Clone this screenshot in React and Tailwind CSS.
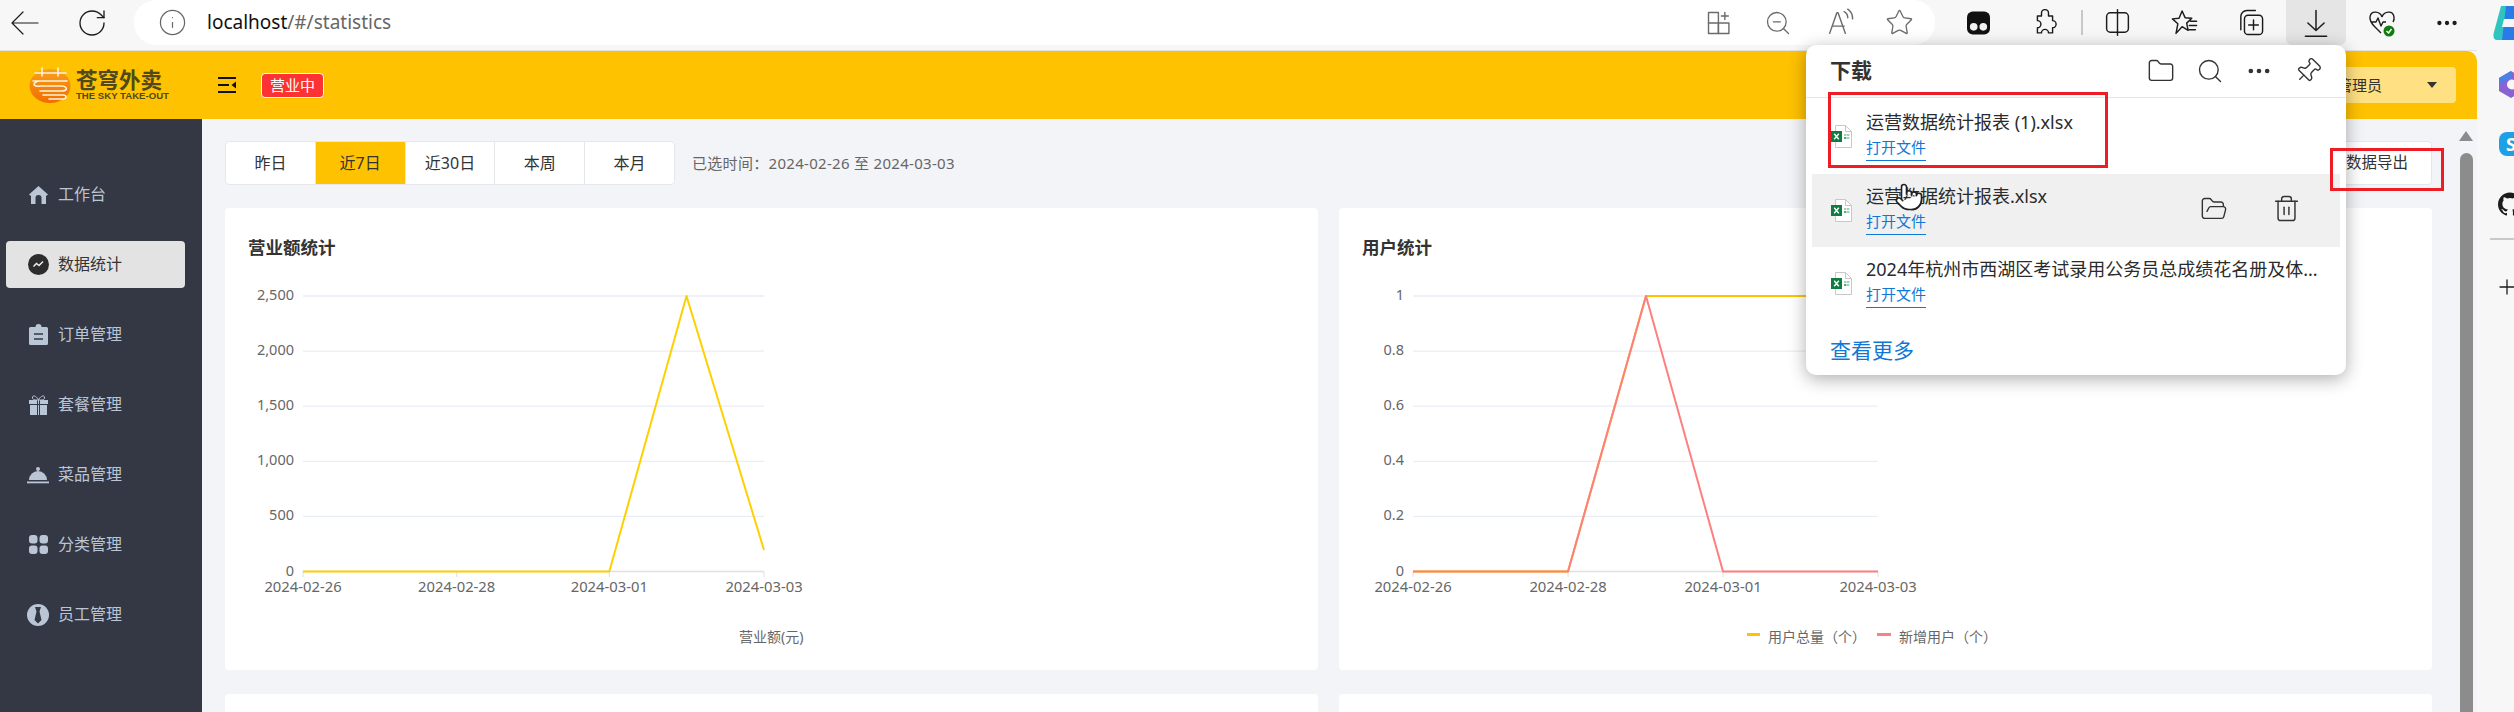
import React from 'react';
import { RotateCw, Info, ZoomOut, Star, Search, MoreHorizontal, Pin, FolderOpen, Trash2, Plus, Pointer, Folder } from 'lucide-react';

const FONT = 'font-["Noto_Sans","Noto_Sans_CJK_SC",sans-serif]';

function ExcelIcon() {
  return (
    <svg width="21" height="23" viewBox="0 0 21 23" className="shrink-0">
      <path d="M4.5 .5H14.5L20.5 6.5V22.5H4.5Z" fill="#fff" stroke="#c8c8c8" />
      <path d="M14.5 .5V6.5H20.5" fill="none" stroke="#c8c8c8" />
      <rect x="13" y="9" width="2.4" height="2" fill="#9fd3b8" />
      <rect x="16" y="9" width="2.4" height="2" fill="#9fd3b8" />
      <rect x="13" y="12" width="2.4" height="2" fill="#4fae83" />
      <rect x="16" y="12" width="2.4" height="2" fill="#9fd3b8" />
      <rect x="0" y="6" width="11" height="11" fill="#107c41" />
      <path d="M3.2 8.7 7.8 14.3M7.8 8.7 3.2 14.3" stroke="#fff" strokeWidth="1.4" />
    </svg>
  );
}

function DownloadItem({ name, hover }) {
  return (
    <div className={`mx-[6px] flex h-[73px] items-center pl-[19px] ${hover ? 'bg-[#f0f0f0]' : ''}`}>
      <ExcelIcon />
      <div className="-mt-[3px] ml-[14px] min-w-0 flex-1">
        <div className="whitespace-nowrap text-[18px] leading-[24px] text-[#2b2b2b]">{name}</div>
        <div className="mt-[2px] inline-block border-b-[1px] border-[#0f78d4] pb-[2px] text-[15px] leading-[22px] text-[#0f78d4]">打开文件</div>
      </div>
      {hover && (
        <div className="flex items-center gap-[44px] pb-[4px] pr-[39px] text-[#333]">
          <FolderOpen size={28} strokeWidth={1.2} />
          <Trash2 size={29} strokeWidth={1.2} />
        </div>
      )}
    </div>
  );
}

function Chart({ title, labels, series, xs, legend }) {
  const left = xs[0];
  const right = xs[3];
  const top = 88;
  const step = 55.1;
  return (
    <div className="h-[462px] min-w-0 flex-1 rounded-[4px] bg-white">
      <svg width="1093" height="462" className="block" style={{ fontFamily: '"Noto Sans","Noto Sans CJK SC",sans-serif' }}>
        <text x="23" y="46" fontSize="17.5" fontWeight="700" fill="#333">{title}</text>
        {labels.map((l, i) => (
          <g key={l}>
            <line x1={left} x2={right} y1={top + i * step} y2={top + i * step} stroke={i === 5 ? '#e0e0e0' : '#e9edf6'} strokeWidth="1.3" />
            <text x={left - 9} y={top + i * step + 4} fontSize="14.5" textAnchor="end" fill="#666">{l}</text>
          </g>
        ))}
        {xs.map((x, i) => (
          <g key={x}>
            <line x1={x} x2={x} y1="363.5" y2="369" stroke="#e0e0e0" />
            <text x={x} y="384" fontSize="14.8" textAnchor="middle" fill="#666">{['2024-02-26', '2024-02-28', '2024-03-01', '2024-03-03'][i]}</text>
          </g>
        ))}
        {series.map((s) => (
          <polyline key={s.color} points={s.points} fill="none" stroke={s.color} strokeWidth="2" strokeLinejoin="round" />
        ))}
        {legend}
      </svg>
    </div>
  );
}

function Nav({ icon, label, active }) {
  return (
    <div className={`mx-[6px] mb-[23px] flex h-[47px] w-[179px] items-center rounded-[4px] pl-[21px] ${active ? 'bg-[#e3e3e3] text-[#333]' : 'text-[#bac5d6]'}`}>
      <span className="flex w-[22px] justify-center">{icon}</span>
      <span className="ml-[9px] pb-[2px] text-[16px]">{label}</span>
    </div>
  );
}

const Ic = ({ children, w = 24, h = 24, vb = '0 0 24 24', className = '' }) => (
  <svg width={w} height={h} viewBox={vb} fill="none" stroke="currentColor" strokeWidth="1.2" strokeLinecap="round" strokeLinejoin="round" className={className}>{children}</svg>
);

function Tool({ x, children, grey }) {
  return (
    <div className={`flex shrink-0 items-center justify-center ${grey ? 'text-[#6b6b6b]' : 'text-[#1c1c1c]'}`} style={{ width: x }}>{children}</div>
  );
}

export default function App() {
  const tabs = ['昨日', '近7日', '近30日', '本周', '本月'];
  return (
    <div className={`relative flex h-[712px] w-[2514px] overflow-hidden bg-[#f7f7f7] ${FONT}`}>
      <div className="flex min-w-0 flex-1 flex-col">
        {/* browser toolbar */}
        <div className="flex h-[51px] shrink-0 items-start border-b border-[#e4e4e4]">
          <div className="flex h-[45px] w-[134px] shrink-0 items-center text-[#1c1c1c]">
            <Ic w={28} h={24} vb="0 0 28 24" className="ml-[11px]">
              <path d="M1 12H27M12 1 1 12 12 23" />
            </Ic>
            <RotateCw size={32} strokeWidth={1} className="ml-[37px]" />
          </div>
          <div className="flex h-[45px] w-[1801px] shrink-0 items-center rounded-[22px] bg-white">
            <Info size={29} strokeWidth={1} className="ml-[24px] text-[#666]" />
            <span className="ml-[20px] text-[19px] text-[#111]">localhost<span className="text-[#666]">/#/statistics</span></span>
            <div className="ml-auto flex items-center pr-[7px]">
              <Tool x={54} grey>
                <Ic w={28} h={28}>
                  <rect x="3" y="3" width="8.500" height="18" /><rect x="11.500" y="12" width="9" height="9" /><path d="M3 12h8.500M17 3v6M14 6h6" />
                </Ic>
              </Tool>
              <Tool x={64} grey>
                <ZoomOut size={28} strokeWidth={1.1} />
              </Tool>
              <Tool x={60} grey>
                <Ic w={29} h={29}>
                  <path d="M3 21 9 4h1l6 17M5 15h10M15 3c2 1 3 3 3 5M18 1c3 2 4 4 4 8" />
                </Ic>
              </Tool>
              <Tool x={58} grey>
                <Star size={29} strokeWidth={1.1} />
              </Tool>
            </div>
          </div>
          <div className="flex h-[45px] shrink-0 items-center">
            <Tool x={86}>
              <svg width="23" height="24" viewBox="0 0 24 24">
                <path d="M6 0H18A6 6 0 0 1 24 6V18A6 6 0 0 1 18 24H6A6 6 0 0 1 0 18V6A6 6 0 0 1 6 0Z" fill="#111" />
                <circle cx="7" cy="16" r="4" fill="#f1f1f1" /><circle cx="17" cy="16" r="4" fill="#f1f1f1" />
              </svg>
            </Tool>
            <Tool x={48}>
              <Ic w={28} h={28}>
                <path d="M9 3.500a3 3 0 0 1 6 0V6h3.500v4a3 3 0 0 1 0 6v4.500H15a3 3 0 0 0-6 0H5.500V16a3 3 0 0 0 0-6V6H9Z" />
              </Ic>
            </Tool>
            <div className="mx-[12px] h-[25px] w-[2px] shrink-0 bg-[#c9c9c9]" />
            <Tool x={44}>
              <Ic w={29} h={29}>
                <rect x="3" y="4" width="18" height="16" rx="3" /><path d="M12 1.500v21" />
              </Ic>
            </Tool>
            <Tool x={90}>
              <Ic w={29} h={29}>
                <path d="M10 2.500 12.500 8 18 8.500 13.800 12.500 15 18.500 10 15.500 5 21 6.500 13 2 9 7.500 8.500ZM17 11h5M16 14.500h6M16 18h5" />
              </Ic>
            </Tool>
            <Tool x={42}>
              <Ic w={29} h={29}>
                <rect x="7" y="6" width="15" height="16" rx="3" /><path d="M4 18V7a5 5 0 0 1 5-5h7M14.500 10v8M10.500 14h8" />
              </Ic>
            </Tool>
            <div className="ml-[15px] flex h-[45px] w-[60px] shrink-0 items-center justify-center rounded-b-[6px] bg-[#e5e5e5] text-[#1c1c1c]">
              <Ic w={30} h={30}>
                <path d="M12 2v16M5.500 12 12 18l6.500-6M3.500 22.500h17" />
              </Ic>
            </div>
            <Tool x={72}>
              <svg width="28" height="28" viewBox="0 0 28 28" fill="none" stroke="#1c1c1c" strokeWidth="1.400" strokeLinejoin="round">
                <path d="M14 8C12 2 3 1 2 8c-.6 4 2 7 5 10l6 6M14 8c2-6 11-7 12 0 .4 3-.4 4-1 5M3 13h5l2-4 3 8 2-4h3" />
                <circle cx="21" cy="22" r="5.500" fill="#107c10" stroke="none" />
                <path d="M18.500 22l2 2 3-4" stroke="#fff" strokeWidth="1.400" />
              </svg>
            </Tool>
            <Tool x={58}>
              <MoreHorizontal size={26} strokeWidth={2} />
            </Tool>
          </div>
        </div>

        {/* page */}
        <div className="relative flex min-h-0 flex-1 flex-col overflow-hidden rounded-tr-[10px]">
          <header className="flex h-[68px] shrink-0 items-center bg-[#ffc200]">
            <div className="flex w-[218px] items-center pl-[29px]">
              <svg width="42" height="36" viewBox="0 0 42 36" className="shrink-0">
                <defs>
                  <linearGradient id="lg" x1="0" y1="0" x2="0" y2="1">
                    <stop offset="0" stopColor="#f9a11b" /><stop offset="1" stopColor="#f26c00" />
                  </linearGradient>
                </defs>
                <ellipse cx="21" cy="19" rx="20.500" ry="17" fill="url(#lg)" />
                <path d="M6 6H37M13 1V9M29 1V9M4 14H38M9 14C2 17 5 20 12 19H33C39 20 39 24 32 24H11M14 28H34C38 28 38 32 34 32H20" fill="none" stroke="#fff3dc" strokeWidth="1.600" strokeLinecap="round" />
              </svg>
              <div className="ml-[5px] flex flex-col text-[#51491a]">
                <span className="whitespace-nowrap text-[21.500px] font-bold leading-[21px]">苍穹外卖</span>
                <span className={`mt-[1px] whitespace-nowrap font-["Liberation_Sans",sans-serif] text-[9.600px] font-bold leading-[10px]`}>THE SKY TAKE-OUT</span>
              </div>
            </div>
            <svg width="18" height="16" viewBox="0 0 18 16" className="shrink-0">
              <path d="M0 1H18M0 15H18M0 8H11" stroke="#111" strokeWidth="2" />
              <path d="M18 4.500V11.500L13.500 8Z" fill="#111" />
            </svg>
            <span className="ml-[25px] flex h-[25px] w-[63px] items-center justify-center rounded-[4px] border border-white bg-[#fd3333] text-[15px] text-white">营业中</span>
            <div className="ml-auto mr-[21px] flex h-[36px] w-[220px] items-center justify-end rounded-[4px] bg-[#ffe082] text-[#333]">
              <span className="text-[15px]">管理员</span>
              <span className="ml-[45px] mr-[19px] h-0 w-0 border-x-[5px] border-t-[6px] border-x-transparent border-t-[#333]" />
            </div>
          </header>

          <div className="flex min-h-0 flex-1">
            <aside className="w-[202px] shrink-0 bg-[#343744] pt-[52px]">
              <Nav label="工作台" icon={
                <svg width="19" height="18" viewBox="0 0 19 18" fill="currentColor"><path d="M9.500 0 19 8.500 17 10V18H12.500V12A3 3 0 0 0 6.500 12V18H2V10L0 8.500Z" /></svg>
              } />
              <Nav active label="数据统计" icon={
                <svg width="21" height="21" viewBox="0 0 21 21"><circle cx="10.500" cy="10.500" r="10.500" fill="#2d2d2d" /><path d="M5.500 12.500 8.500 9.500 11 11.500 15 7.500" fill="none" stroke="#eee" strokeWidth="1.500" /></svg>
              } />
              <Nav label="订单管理" icon={
                <svg width="19" height="21" viewBox="0 0 19 21"><path d="M1.500 3H6.500A3 3 0 0 1 12.500 3H17.500A1.500 1.500 0 0 1 19 4.500V19.500A1.500 1.500 0 0 1 17.500 21H1.500A1.500 1.500 0 0 1 0 19.500V4.500A1.500 1.500 0 0 1 1.500 3Z" fill="currentColor" /><path d="M5 10H14M5 15H14" stroke="#343744" strokeWidth="1.500" /></svg>
              } />
              <Nav label="套餐管理" icon={
                <svg width="19" height="20" viewBox="0 0 19 20"><rect x="0" y="5" width="19" height="4" fill="currentColor" /><rect x="1" y="10" width="17" height="10" fill="currentColor" /><path d="M8.500 5V20M10.500 5V20" stroke="#343744" /><path d="M9.500 5C7 0 3 0 3.500 3 3.500 5 7 5 9.500 5 12 5 15.500 5 15.500 3 16 0 12 0 9.500 5Z" fill="none" stroke="currentColor" /></svg>
              } />
              <Nav label="菜品管理" icon={
                <svg width="22" height="18" viewBox="0 0 22 18"><path d="M2 14A9 9 0 0 1 20 14Z" fill="currentColor" /><circle cx="11" cy="3" r="2" fill="currentColor" /><rect x="0" y="15.500" width="22" height="1.800" fill="currentColor" /></svg>
              } />
              <Nav label="分类管理" icon={
                <svg width="19" height="19" viewBox="0 0 19 19" fill="currentColor"><rect width="8.500" height="8.500" rx="3" /><rect x="10.500" width="8.500" height="8.500" rx="3" /><rect y="10.500" width="8.500" height="8.500" rx="3" /><rect x="10.500" y="10.500" width="8.500" height="8.500" rx="3" /></svg>
              } />
              <Nav label="员工管理" icon={
                <svg width="22" height="22" viewBox="0 0 22 22"><circle cx="11" cy="11" r="11" fill="currentColor" /><path d="M8 3H14L12.500 7.500 14.500 16 11 19.500 7.500 16 9.500 7.500Z" fill="#343744" /></svg>
              } />
            </aside>

            <main className="min-w-0 flex-1 overflow-hidden bg-[#f3f4f7] px-[23px] pt-[22px]">
              <div className="flex h-[44px] items-center">
                <div className="flex h-[44px] w-[450px] overflow-hidden rounded-[4px] border border-[#e5e7eb] bg-white">
                  {tabs.map((t, i) => (
                    <div key={t} className={`flex flex-1 items-center justify-center text-[16px] text-[#333] ${i > 0 ? 'border-l border-[#e5e7eb]' : ''} ${i === 1 ? 'bg-[#ffc200]' : ''}`}>{t}</div>
                  ))}
                </div>
                <span className="ml-[17px] text-[15px] tracking-[0.3px] text-[#666]">已选时间：2024-02-26 至 2024-03-03</span>
                <div className="ml-auto flex h-[44px] w-[110px] items-center justify-center rounded-[4px] border border-[#e5e7eb] bg-white text-[15.500px] text-[#333]">数据导出</div>
              </div>
              <div className="mt-[23px] flex gap-[21px]">
                <Chart
                  title="营业额统计"
                  labels={['2,500', '2,000', '1,500', '1,000', '500', '0']}
                  xs={[78, 231.700, 384.300, 539]}
                  series={[{ color: '#ffd000', points: '78,363.500 384.300,363.500 461.500,88 539,342' }]}
                  legend={<text x="514" y="434" fontSize="14" fill="#666">营业额(元)</text>}
                />
                <Chart
                  title="用户统计"
                  labels={['1', '0.8', '0.6', '0.4', '0.2', '0']}
                  xs={[74, 229, 384, 539]}
                  series={[
                    { color: '#ffc200', points: '74,363.500 229,363.500 307,88 539,88' },
                    { color: '#fd7f7f', points: '74,363.500 229,363.500 307,88 384,363.500 539,363.500' },
                  ]}
                  legend={
                    <g>
                      <rect x="408" y="425" width="13" height="3" fill="#ffc200" />
                      <text x="429" y="434" fontSize="14" fill="#666">用户总量（个）</text>
                      <rect x="538" y="425" width="14" height="3" fill="#fd7f7f" />
                      <text x="560" y="434" fontSize="14" fill="#666">新增用户（个）</text>
                    </g>
                  }
                />
              </div>
              <div className="mt-[24px] flex gap-[21px]">
                <div className="h-[200px] flex-1 rounded-[4px] bg-white" />
                <div className="h-[200px] flex-1 rounded-[4px] bg-white" />
              </div>
            </main>

            <div className="relative w-[22px] shrink-0 bg-[#f3f4f7]">
              <div className="absolute left-[4px] top-[12px] h-0 w-0 border-x-[7.500px] border-b-[10px] border-x-transparent border-b-[#8c8c8c]" />
              <div className="absolute left-[5px] top-[34px] h-[600px] w-[13px] rounded-full bg-[#8c8c8c]" />
            </div>
          </div>
        </div>
      </div>

      {/* browser side rail */}
      <div className="relative flex w-[37px] shrink-0 flex-col items-start overflow-hidden">
        <svg width="21" height="36" viewBox="0 0 21 36" className="ml-[16px] mt-[5px] shrink-0">
          <path d="M8 1H21V20L12 35H4C0 35 0 30 1 27Z" fill="#2fc4c0" />
          <path d="M13 1H21V35H9Z" fill="#2a7be8" />
          <path d="M11 14H21V22H9Z" fill="#f7f7f7" />
        </svg>
        <svg width="24" height="27" viewBox="0 0 24 27" className="ml-[22px] mt-[30px] shrink-0">
          <path d="M12 0 24 7V20L12 27 0 20V7Z" fill="#8a63d2" />
          <path d="M12 0 0 7V13L12 7Z" fill="#4a80e8" />
          <circle cx="13" cy="13.500" r="5" fill="#f7f7f7" />
        </svg>
        <div className="ml-[22px] mt-[34px] flex h-[24px] w-[24px] shrink-0 items-center justify-center rounded-[8px] bg-[#1ea0e6] text-[18px] font-bold text-white">S</div>
        <svg width="24" height="24" viewBox="0 0 24 24" className="ml-[21px] mt-[36px] shrink-0">
          <path fill="#1c1c1c" d="M12 .5C5.400.5 0 5.800 0 12.300c0 5.200 3.400 9.700 8.200 11.300.6.100.8-.3.800-.6v-2c-3.300.7-4-1.600-4-1.600-.5-1.400-1.300-1.800-1.300-1.800-1.100-.7.100-.7.100-.7 1.200.1 1.800 1.200 1.800 1.200 1.100 1.800 2.800 1.300 3.500 1 .1-.8.400-1.300.8-1.600-2.700-.3-5.500-1.300-5.500-5.900 0-1.300.5-2.400 1.200-3.200-.1-.3-.5-1.500.1-3.200 0 0 1-.3 3.300 1.200a11.500 11.500 0 0 1 6 0c2.300-1.500 3.300-1.200 3.300-1.200.7 1.700.2 2.900.1 3.200.8.800 1.200 1.900 1.200 3.200 0 4.600-2.800 5.600-5.500 5.900.4.400.8 1.100.8 2.200V23c0 .3.200.7.800.6 4.800-1.600 8.200-6 8.200-11.300C24 5.800 18.600.5 12 .5Z" />
        </svg>
        <div className="ml-[13px] mt-[22px] h-[2px] w-[30px] shrink-0 bg-[#c9c9c9]" />
        <Plus size={24} strokeWidth={1.3} className="ml-[18px] mt-[35px] shrink-0 text-[#1c1c1c]" />
      </div>

      {/* download flyout */}
      <div className="absolute left-[1806px] top-[45px] z-10 h-[330px] w-[540px] rounded-[10px] bg-white shadow-[0_4px_18px_rgba(0,0,0,0.32)]">
        <div className="flex h-[53px] items-center border-b border-[#e6e6e6] pl-[24px]">
          <span className="text-[21px] font-bold text-[#333]">下载</span>
          <div className="ml-auto flex items-center gap-[21px] pr-[24px] text-[#333]">
            <Folder size={28} strokeWidth={1.2} />
            <Search size={28} strokeWidth={1.2} />
            <MoreHorizontal size={28} strokeWidth={2} />
            <Pin size={28} strokeWidth={1.2} className="rotate-45" />
          </div>
        </div>
        <div className="pt-[2px]">
          <div className="mb-[1px]"><DownloadItem name="运营数据统计报表 (1).xlsx" /></div>
          <DownloadItem hover name="运营数据统计报表.xlsx" />
          <DownloadItem name="2024年杭州市西湖区考试录用公务员总成绩花名册及体..." />
        </div>
        <div className="mt-[15px] pl-[24px] text-[21px] text-[#0f78d4]">查看更多</div>
      </div>

      {/* annotations and pointer, over everything */}
      <div className="absolute left-[1828px] top-[92px] z-20 h-[76px] w-[280px] border-[3px] border-[#ee1c25]" />
      <div className="absolute left-[2330px] top-[148px] z-20 h-[43px] w-[114px] border-[3px] border-[#ee1c25]" />
      <Pointer size={30} strokeWidth={1.3} fill="#fff" className="absolute left-[1894px] top-[182px] z-20 text-[#222]" />
    </div>
  );
}
